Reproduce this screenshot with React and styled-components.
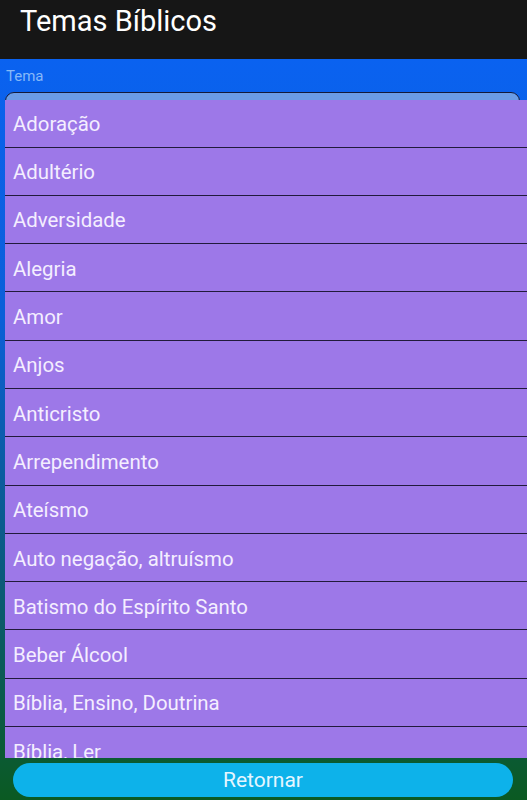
import styled, { createGlobalStyle } from "styled-components"

const GlobalStyle = createGlobalStyle`
  html, body {
    margin: 0;
    padding: 0;
    background: #161616;
  }
  * { box-sizing: border-box; }
`

const temas = [
  "Adoração",
  "Adultério",
  "Adversidade",
  "Alegria",
  "Amor",
  "Anjos",
  "Anticristo",
  "Arrependimento",
  "Ateísmo",
  "Auto negação, altruísmo",
  "Batismo do Espírito Santo",
  "Beber Álcool",
  "Bíblia, Ensino, Doutrina",
  "Bíblia, Ler",
  "Blasfêmia",
]

const App = () => {
  return (
    <Screen>
      <GlobalStyle />
      <Header>
        <Title>Temas Bíblicos</Title>
      </Header>
      <Body>
        <Label>Tema</Label>
        <Field>
          <SelectBox />
          <Menu>
            {temas.map(t => (
              <MenuItem key={t}>{t}</MenuItem>
            ))}
          </Menu>
        </Field>
        <Footer>
          <ReturnButton>Retornar</ReturnButton>
        </Footer>
      </Body>
    </Screen>
  )
}

const Screen = styled.div`
  width: 527px;
  height: 800px;
  display: flex;
  flex-direction: column;
  overflow: hidden;
  font-family: Roboto, "Liberation Sans", sans-serif;
`

const Header = styled.header`
  height: 59px;
  flex: none;
  background: #161616;
  padding: 4px 0 0 20px;
`

const Title = styled.h1`
  margin: 0;
  font-size: 29px;
  font-weight: 400;
  color: #ffffff;
  line-height: 34px;
`

const Body = styled.main`
  flex: 1;
  min-height: 0;
  display: flex;
  flex-direction: column;
  background: linear-gradient(180deg, #0a62f0 0%, #0b5fd8 35%, #0b5a7a 70%, #0b5a22 100%);
`

const Label = styled.div`
  height: 33px;
  padding: 8px 0 0 6px;
  font-size: 15px;
  color: #86b8f8;
`

const Field = styled.div`
  position: relative;
  flex: 1;
  min-height: 0;
  padding: 0 7px 0 5px;
`

const SelectBox = styled.div`
  height: 40px;
  border: 1.5px solid #141a3a;
  border-radius: 9px;
  background: #6a9ce6;
`

const Menu = styled.ul`
  position: absolute;
  top: 8px;
  left: 5px;
  right: 0;
  bottom: 0;
  margin: 0;
  padding: 0;
  list-style: none;
  overflow: hidden;
  background: #9d78e8;
`

const MenuItem = styled.li`
  height: 48.3px;
  display: flex;
  align-items: center;
  padding: 2px 0 0 8px;
  font-size: 20.4px;
  color: #f4eeff;
  border-bottom: 1.5px solid #221a3c;
  &:first-child {
    height: 47.5px;
  }
`

const Footer = styled.footer`
  height: 42px;
  flex: none;
  padding: 5px 14px 3px 13px;
`

const ReturnButton = styled.button`
  width: 100%;
  height: 34px;
  border: none;
  border-radius: 17px;
  background: #0db2ea;
  color: #e4f6ff;
  font-family: Roboto, "Liberation Sans", sans-serif;
  font-size: 21px;
  padding: 0;
`

export default App
